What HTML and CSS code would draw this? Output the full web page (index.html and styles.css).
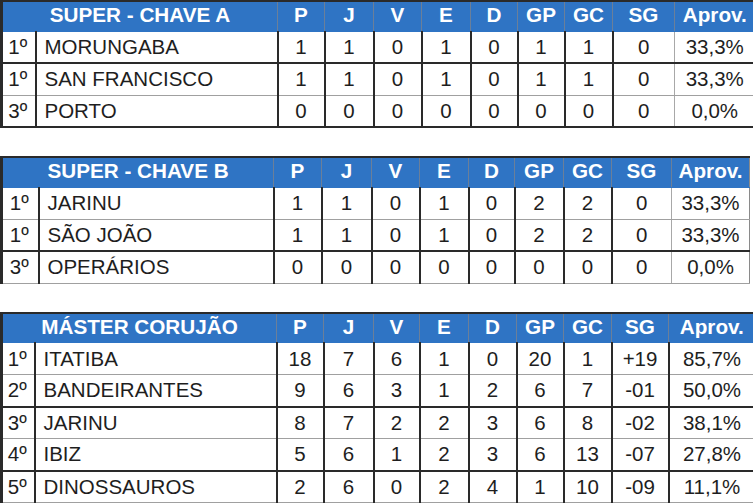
FILE: index.html
```html
<!DOCTYPE html>
<html lang="pt-BR">
<head>
<meta charset="utf-8">
<title>Classificação</title>
<link rel="stylesheet" href="styles.css">
</head>
<body>
<div class="page">
  <table class="standings t1">
    <colgroup>
      <col class="c-rank"><col class="c-name"><col class="c-p"><col class="c-j"><col class="c-v"><col class="c-e"><col class="c-d"><col class="c-gp"><col class="c-gc"><col class="c-sg"><col class="c-ap">
    </colgroup>
    <thead>
      <tr><th colspan="2" class="title">SUPER - CHAVE A</th><th>P</th><th>J</th><th>V</th><th>E</th><th>D</th><th>GP</th><th>GC</th><th>SG</th><th class="ap">Aprov.</th></tr>
    </thead>
    <tbody>
      <tr class="dark"><td class="rank">1º</td><td class="name">MORUNGABA</td><td>1</td><td>1</td><td>0</td><td>1</td><td>0</td><td>1</td><td>1</td><td>0</td><td class="ap soft">33,3%</td></tr>
      <tr class="light"><td class="rank">1º</td><td class="name">SAN FRANCISCO</td><td>1</td><td>1</td><td>0</td><td>1</td><td>0</td><td>1</td><td>1</td><td>0</td><td class="ap soft">33,3%</td></tr>
      <tr class="dark"><td class="rank">3º</td><td class="name">PORTO</td><td>0</td><td>0</td><td>0</td><td>0</td><td>0</td><td>0</td><td>0</td><td>0</td><td class="ap soft">0,0%</td></tr>
    </tbody>
  </table>

  <table class="standings t2">
    <colgroup>
      <col class="c-rank"><col class="c-name"><col class="c-p"><col class="c-j"><col class="c-v"><col class="c-e"><col class="c-d"><col class="c-gp"><col class="c-gc"><col class="c-sg"><col class="c-ap">
    </colgroup>
    <thead>
      <tr><th colspan="2" class="title">SUPER - CHAVE B</th><th>P</th><th>J</th><th>V</th><th>E</th><th>D</th><th>GP</th><th>GC</th><th>SG</th><th class="ap">Aprov.</th></tr>
    </thead>
    <tbody>
      <tr class="light"><td class="rank">1º</td><td class="name">JARINU</td><td>1</td><td>1</td><td>0</td><td>1</td><td>0</td><td>2</td><td>2</td><td>0</td><td class="ap soft">33,3%</td></tr>
      <tr class="dark"><td class="rank">1º</td><td class="name">SÃO JOÃO</td><td>1</td><td>1</td><td>0</td><td>1</td><td>0</td><td>2</td><td>2</td><td>0</td><td class="ap soft">33,3%</td></tr>
      <tr class="light"><td class="rank">3º</td><td class="name">OPERÁRIOS</td><td>0</td><td>0</td><td>0</td><td>0</td><td>0</td><td>0</td><td>0</td><td>0</td><td class="ap soft">0,0%</td></tr>
    </tbody>
  </table>

  <table class="standings t3">
    <colgroup>
      <col class="c-rank"><col class="c-name"><col class="c-p"><col class="c-j"><col class="c-v"><col class="c-e"><col class="c-d"><col class="c-gp"><col class="c-gc"><col class="c-sg"><col class="c-ap">
    </colgroup>
    <thead>
      <tr><th colspan="2" class="title">MÁSTER CORUJÃO</th><th>P</th><th>J</th><th>V</th><th>E</th><th>D</th><th>GP</th><th>GC</th><th>SG</th><th class="ap">Aprov.</th></tr>
    </thead>
    <tbody>
      <tr class="light"><td class="rank">1º</td><td class="name">ITATIBA</td><td>18</td><td>7</td><td>6</td><td>1</td><td>0</td><td>20</td><td>1</td><td>+19</td><td class="ap">85,7%</td></tr>
      <tr class="dark"><td class="rank">2º</td><td class="name">BANDEIRANTES</td><td>9</td><td>6</td><td>3</td><td>1</td><td>2</td><td>6</td><td>7</td><td>-01</td><td class="ap">50,0%</td></tr>
      <tr class="light"><td class="rank">3º</td><td class="name">JARINU</td><td>8</td><td>7</td><td>2</td><td>2</td><td>3</td><td>6</td><td>8</td><td>-02</td><td class="ap">38,1%</td></tr>
      <tr class="dark"><td class="rank">4º</td><td class="name">IBIZ</td><td>5</td><td>6</td><td>1</td><td>2</td><td>3</td><td>6</td><td>13</td><td>-07</td><td class="ap">27,8%</td></tr>
      <tr class="light"><td class="rank">5º</td><td class="name">DINOSSAUROS</td><td>2</td><td>6</td><td>0</td><td>2</td><td>4</td><td>1</td><td>10</td><td>-09</td><td class="ap">11,1%</td></tr>
    </tbody>
  </table>
</div>
</body>
</html>
```

FILE: styles.css
```css
* { box-sizing: border-box; }
html, body { margin: 0; padding: 0; background: #ffffff; }

.page {
  display: flex;
  flex-direction: column;
  width: 753px;
  overflow: hidden;
}

.standings {
  border-collapse: collapse;
  table-layout: fixed;
  font-family: "Liberation Sans", Arial, sans-serif;
  color: #1e1e1e;
}

.standings th {
  background: #2f74c4;
  color: #ffffff;
  font-weight: bold;
  font-size: 20.7px;
  height: 30px;
  padding: 0 0 2px;
  text-align: center;
  border-top: 2px solid #2a2a2a;
  border-left: 1px solid #6b7f99;
  border-bottom: 1px solid #2f74c4;
  white-space: nowrap;
}
.standings th.title { border-left: 3px solid #2a2a2a; }

.standings td {
  height: 32px;
  padding: 0;
  font-size: 20.5px;
  text-align: center;
  border-left: 2px solid #2a2a2a;
  white-space: nowrap;
}
.standings td.rank { border-left: 3px solid #2a2a2a; padding-right: 2px; }
.standings td.name { text-align: left; padding-left: 8px; }
.standings td.ap.soft { border-left: 1px solid #a8a8a8; }

.standings tr.dark td { border-bottom: 2px solid #2a2a2a; }
.standings tr.light td { border-bottom: 1px solid #a0a0a0; }

/* table 1 */
.t1 { width: 753px; margin-bottom: 28px; }
.t1 .c-rank { width: 34px; }
.t1 .c-name { width: 242px; }
.t1 .c-p { width: 47px; }
.t1 .c-j { width: 49px; }
.t1 .c-v { width: 48px; }
.t1 .c-e { width: 49px; }
.t1 .c-d { width: 47px; }
.t1 .c-gp { width: 47px; }
.t1 .c-gc { width: 48px; }
.t1 .c-sg { width: 62px; }
.t1 .c-ap { width: 80px; }

/* table 2 */
.t2 { width: 748px; margin-bottom: 28px; }
.t2 .c-rank { width: 37px; }
.t2 .c-name { width: 235px; }
.t2 .c-p { width: 48px; }
.t2 .c-j { width: 50px; }
.t2 .c-v { width: 48px; }
.t2 .c-e { width: 49px; }
.t2 .c-d { width: 46px; }
.t2 .c-gp { width: 49px; }
.t2 .c-gc { width: 48px; }
.t2 .c-sg { width: 60px; }
.t2 .c-ap { width: 78px; }
.t2 td.ap, .t2 th.ap { border-right: 1px solid #8a8a8a; }

/* table 3 */
.t3 { width: 753px; }
.t3 .c-rank { width: 33px; }
.t3 .c-name { width: 242px; }
.t3 .c-p { width: 47px; }
.t3 .c-j { width: 50px; }
.t3 .c-v { width: 46px; }
.t3 .c-e { width: 49px; }
.t3 .c-d { width: 48px; }
.t3 .c-gp { width: 47px; }
.t3 .c-gc { width: 48px; }
.t3 .c-sg { width: 57px; }
.t3 .c-ap { width: 86px; }
```
